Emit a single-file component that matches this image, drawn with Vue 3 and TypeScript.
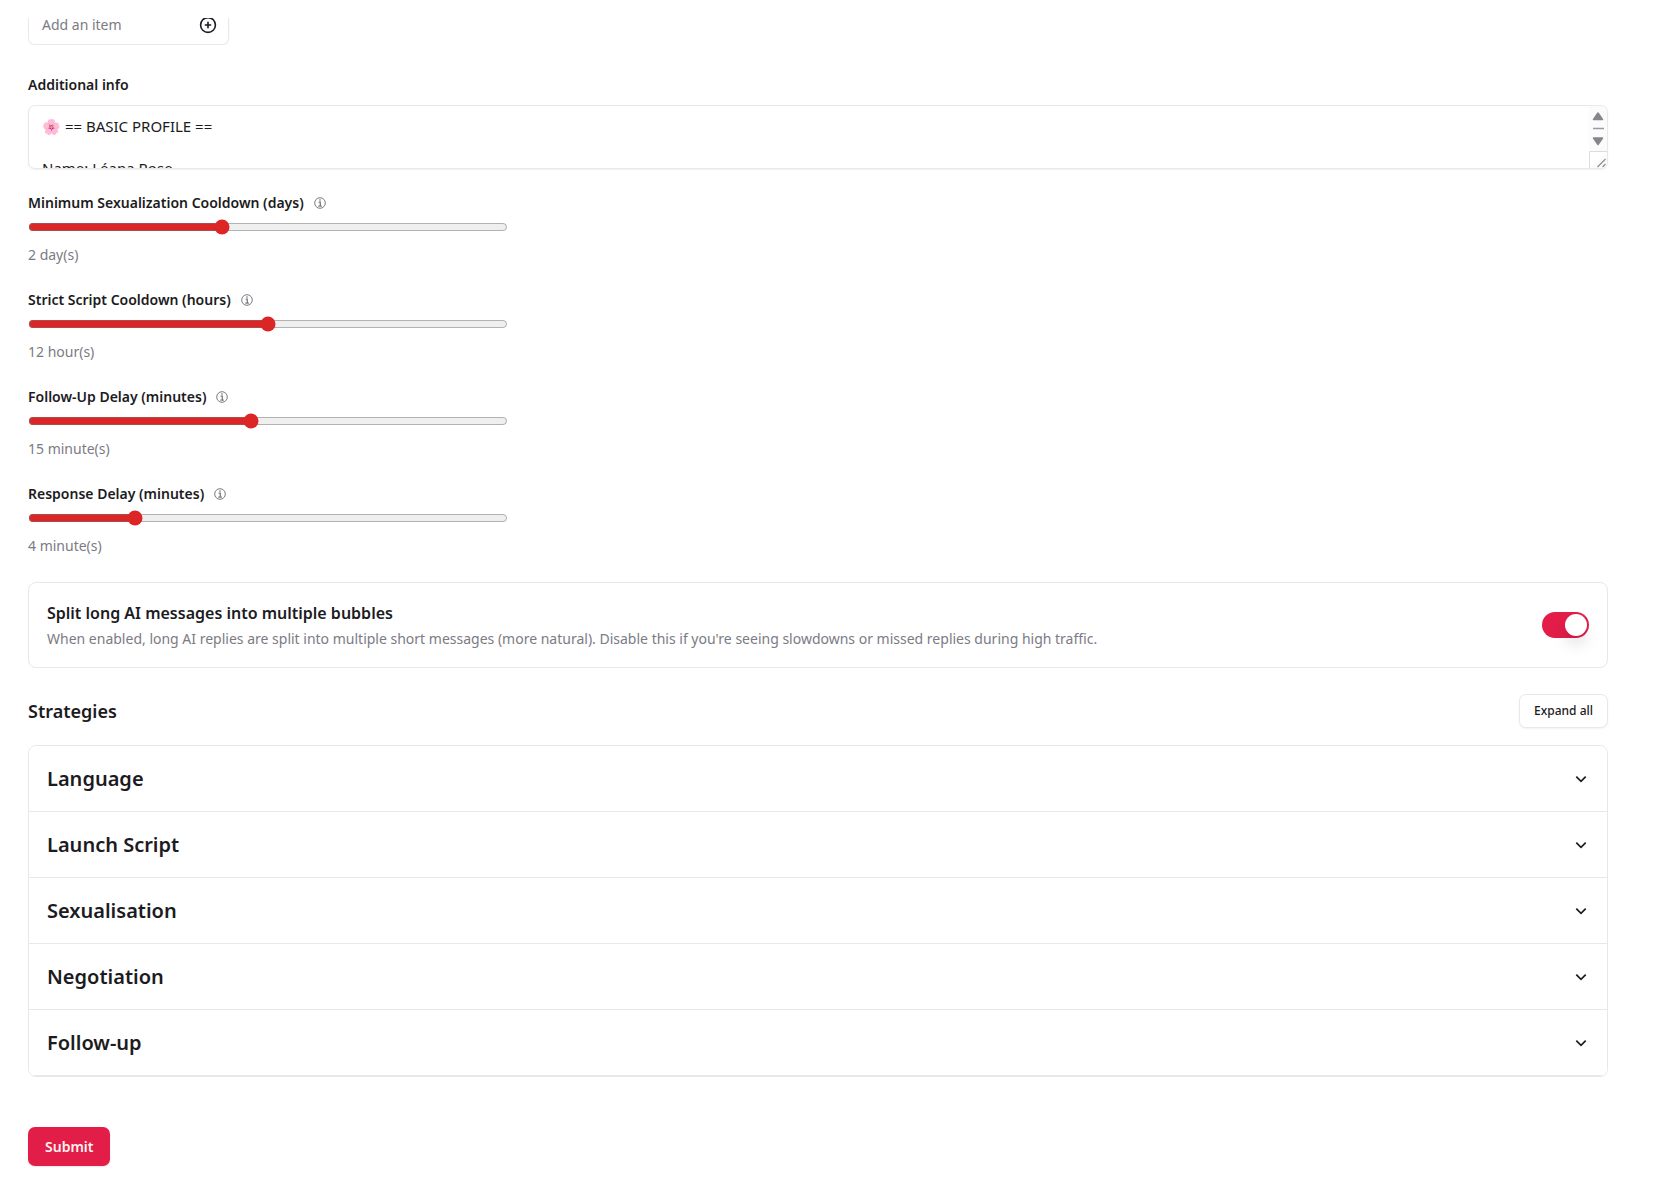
<script setup lang="ts">
import { ref } from 'vue'

interface Slider {
  id: string
  label: string
  unit: string
  min: number
  max: number
  value: number
}

const item = ref('')
const info = ref('🌸 == BASIC PROFILE ==\n\nName: Léana Rose')
const split = ref(true)
const sliders = ref<Slider[]>([
  { id: 'sex-cooldown', label: 'Minimum Sexualization Cooldown (days)', unit: 'day(s)', min: 0, max: 5, value: 2 },
  { id: 'script-cooldown', label: 'Strict Script Cooldown (hours)', unit: 'hour(s)', min: 0, max: 24, value: 12 },
  { id: 'follow-up', label: 'Follow-Up Delay (minutes)', unit: 'minute(s)', min: 2, max: 30, value: 15 },
  { id: 'response', label: 'Response Delay (minutes)', unit: 'minute(s)', min: 1, max: 15, value: 4 },
])
const strategies: string[] = ['Language', 'Launch Script', 'Sexualisation', 'Negotiation', 'Follow-up']
</script>

<template>
  <form class="page" @submit.prevent>
    <div class="clip">
      <div class="add">
        <input v-model="item" type="text" placeholder="Add an item" aria-label="Add an item" />
        <button type="button" class="plus" aria-label="Add">
          <svg width="18" height="18" viewBox="0 0 18 18" fill="none" stroke="currentColor" stroke-width="1.6">
            <circle cx="9" cy="9" r="7.4" />
            <path d="M9 5.8v6.4M5.8 9h6.4" />
          </svg>
        </button>
      </div>
    </div>

    <label class="label info-label" for="info">Additional info</label>
    <div class="area">
      <textarea id="info" v-model="info"></textarea>
      <svg width="18" height="62" viewBox="0 0 18 62" aria-hidden="true">
        <rect width="18" height="62" fill="#fbfbfb" />
        <path d="M9 7l4.500 6.500h-9z M9 38.500l4.500-6.500h-9z" fill="#85858c" stroke="#85858c" stroke-width="1.500" stroke-linejoin="round" />
        <path d="M4 22.500h11" stroke="#9a9aa0" stroke-width="1.500" />
        <path d="M.5 62V45.500H18" fill="#fff" stroke="#dcdcdf" />
        <path d="M8.500 61l8-8M13.500 61l3-3" stroke="#8c8c8c" stroke-width="1.200" />
      </svg>
    </div>

    <div class="sliders">
      <div v-for="s in sliders" :key="s.id" class="slider">
        <div class="head">
          <label class="label" :for="s.id">{{ s.label }}</label>
          <svg width="12" height="12" viewBox="0 0 12 12" fill="none" stroke="#7b7b84">
            <circle cx="6" cy="6" r="5.3" />
            <path d="M6 2.300v1.500M4.600 5.200H6.300v3.800M4.300 9.200h3.600" stroke-width="1.300" />
          </svg>
        </div>
        <input :id="s.id" v-model.number="s.value" type="range" :min="s.min" :max="s.max" />
        <p class="muted">{{ s.value }} {{ s.unit }}</p>
      </div>
    </div>

    <section class="card">
      <div>
        <label class="card-title" for="split">Split long AI messages into multiple bubbles</label>
        <p class="muted">When enabled, long AI replies are split into multiple short messages (more natural). Disable this if you're seeing slowdowns or missed replies during high traffic.</p>
      </div>
      <input id="split" v-model="split" class="switch" type="checkbox" role="switch" />
    </section>

    <div class="row">
      <h2>Strategies</h2>
      <button type="button" class="expand">Expand all</button>
    </div>

    <div class="accordion">
      <button v-for="name in strategies" :key="name" type="button" class="entry" aria-expanded="false">
        <span>{{ name }}</span>
        <svg width="16" height="16" viewBox="0 0 16 16" fill="none" stroke="currentColor" stroke-width="1.700">
          <path d="M3.300 5.700L8 10.300l4.700-4.600" />
        </svg>
      </button>
    </div>

    <button type="submit" class="submit">Submit</button>
  </form>
</template>

<style>
body {
  background: #fff;
}
</style>

<style scoped>
* {
  box-sizing: border-box;
}
.page {
  padding: 18px 48px 16px 28px;
  font-family: 'Segoe UI', 'Noto Sans', 'Open Sans', sans-serif;
  font-size: 14px;
  line-height: 20px;
  color: #1c1b22;
}
button,
input,
textarea {
  font: inherit;
  color: inherit;
}
p,
h2 {
  margin: 0;
}
.clip {
  height: 27px;
  overflow: hidden;
  display: flex;
  align-items: flex-end;
}
.add {
  display: flex;
  align-items: center;
  flex: none;
  width: 201px;
  height: 40px;
  padding: 0 11px 0 13px;
  border: 1px solid #e8e8eb;
  border-radius: 7px;
  box-shadow: 0 1px 2px rgb(0 0 0 / 5%);
}
.add input {
  flex: 1;
  min-width: 0;
  padding: 0;
  border: 0;
  outline: 0;
  background: none;
}
.add input::placeholder {
  color: #7b7b84;
}
.plus {
  display: flex;
  padding: 0;
  border: 0;
  background: none;
}
.label {
  font-weight: 600;
}
.info-label {
  display: block;
  margin: 30px 0 10px;
}
.area {
  display: flex;
  height: 64px;
  border: 1px solid #e8e8eb;
  border-radius: 7px;
  box-shadow: 0 1px 2px rgb(0 0 0 / 6%);
  overflow: hidden;
}
.area textarea {
  flex: 1;
  padding: 10px 13px 0;
  border: 0;
  outline: 0;
  resize: none;
  overflow: hidden;
  font-size: 15px;
  line-height: 21px;
  background: none;
}
.sliders {
  display: grid;
  gap: 25px;
  margin-top: 24px;
}
.slider {
  display: grid;
  width: 480px;
}
.head {
  display: flex;
  align-items: center;
  gap: 10px;
}
.slider input {
  width: 100%;
  height: 16px;
  margin: 6px 0 10px;
  accent-color: #dc2626;
}
.muted {
  color: #7b7b84;
}
.card {
  display: flex;
  align-items: center;
  justify-content: space-between;
  margin-top: 26px;
  padding: 18px;
  border: 1px solid #e8e8eb;
  border-radius: 8px;
}
.card-title {
  display: block;
  margin-bottom: 4px;
  font-size: 16px;
  line-height: 24px;
  font-weight: 600;
}
.switch {
  appearance: none;
  flex: none;
  width: 47px;
  height: 26px;
  margin: 0;
  padding: 2px;
  border-radius: 13px;
  background: #d4d4d8;
}
.switch::before {
  content: '';
  display: block;
  width: 22px;
  height: 22px;
  border-radius: 50%;
  background: #fff;
  box-shadow: 0 10px 15px rgb(0 0 0 / 10%);
}
.switch:checked {
  padding-left: 23px;
  background: #e11d48;
}
.row {
  display: flex;
  align-items: center;
  justify-content: space-between;
  margin: 26px 0 17px;
}
h2 {
  font-size: 18px;
  line-height: 28px;
  font-weight: 600;
}
.expand {
  height: 34px;
  padding: 0 14px;
  border: 1px solid #e8e8eb;
  border-radius: 7px;
  background: #fff;
  box-shadow: 0 1px 2px rgb(0 0 0 / 5%);
  font-size: 12px;
  font-weight: 500;
}
.accordion {
  border: 1px solid #e8e8eb;
  border-radius: 8px;
  overflow: hidden;
}
.entry {
  display: flex;
  align-items: center;
  justify-content: space-between;
  width: 100%;
  height: 66px;
  padding: 0 18px;
  border: 0;
  border-bottom: 1px solid #e8e8eb;
  background: #fff;
  font-size: 20px;
  font-weight: 600;
  text-align: left;
}
.submit {
  display: block;
  height: 39px;
  margin-top: 50px;
  padding: 0 17px;
  border: 0;
  border-radius: 7px;
  background: #e11d48;
  box-shadow: 0 1px 2px rgb(0 0 0 / 10%);
  color: #fff1f2;
  font-weight: 600;
}
</style>
